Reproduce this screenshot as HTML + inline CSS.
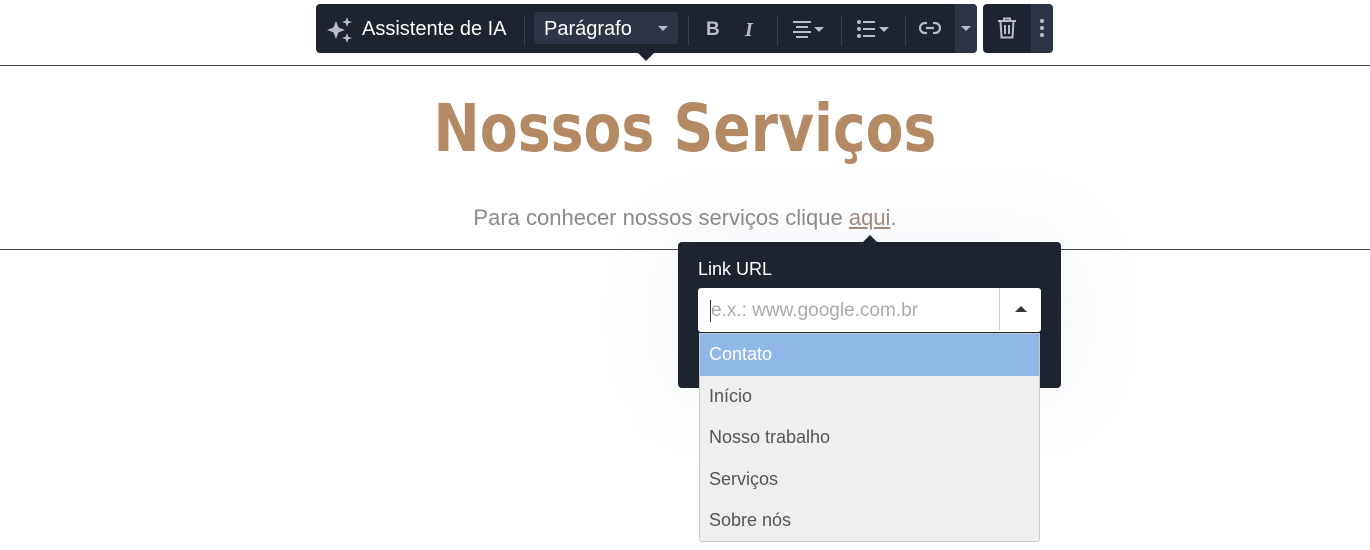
<!DOCTYPE html>
<html><head><meta charset="utf-8"><style>
*{margin:0;padding:0;box-sizing:border-box}
body{width:1370px;height:550px;background:#fff;position:relative;overflow:hidden;font-family:"Liberation Sans",sans-serif}
.abs{position:absolute}
.tb{left:316px;top:4px;width:661px;height:49px;background:#1e2330;border-radius:4px}
.sep{position:absolute;top:12px;width:1px;height:30px;background:#3a4152}
.ic{position:absolute;fill:#b8bdc8}
.line{left:0;width:1370px;height:1px;background:#444}
.item{height:41.5px;line-height:41.5px;padding-left:9px;font-size:18px;color:#555}
</style></head><body>
<div class="abs line" style="top:65px"></div>
<div class="abs line" style="top:249px"></div>

<div class="abs tb">
 <svg class="ic" style="left:10px;top:12px" width="28" height="28" viewBox="0 0 28 28"><path d="M10 5 L12.5 11.5 L19 14 L12.5 16.5 L10 23 L7.5 16.5 L1 14 L7.5 11.5Z"/><path d="M21 1 L22.3 4.7 L26 6 L22.3 7.3 L21 11 L19.7 7.3 L16 6 L19.7 4.7Z"/><path d="M21 17 L22.3 20.7 L26 22 L22.3 23.3 L21 27 L19.7 23.3 L16 22 L19.7 20.7Z"/></svg>
 <div class="abs" style="left:46px;top:14px;color:#fff;font-size:20px">Assistente de IA</div>
 <div class="sep" style="left:208px"></div>
 <div class="abs" style="left:218px;top:8px;width:144px;height:32px;background:#2d3446;border-radius:3px">
  <div class="abs" style="left:10px;top:6px;color:#fff;font-size:20px">Parágrafo</div>
  <div class="abs" style="left:124px;top:14px;border-left:5px solid transparent;border-right:5px solid transparent;border-top:5px solid #b8bdc8"></div>
 </div>
 <div class="sep" style="left:372px"></div>
 <div class="abs" style="left:390px;top:15px;color:#b8bdc8;font-size:19px;font-weight:bold">B</div>
 <div class="abs" style="left:429px;top:15px;color:#b8bdc8;font-size:20px;font-weight:bold;font-style:italic;font-family:'Liberation Serif',serif">I</div>
 <div class="sep" style="left:461px"></div>
 <svg class="ic" style="left:477px;top:15px" width="36" height="20" viewBox="0 0 36 20"><rect x="0" y="2" width="18" height="2"/><rect x="3" y="7" width="12" height="2"/><rect x="0" y="12" width="18" height="2"/><rect x="3" y="17" width="12" height="2"/><path d="M21 8 L31 8 L26 13Z"/></svg>
 <div class="sep" style="left:525px"></div>
 <svg class="ic" style="left:541px;top:15px" width="36" height="20" viewBox="0 0 36 20"><circle cx="2" cy="3" r="2"/><circle cx="2" cy="10" r="2"/><circle cx="2" cy="17" r="2"/><rect x="6" y="2" width="12" height="2"/><rect x="6" y="9" width="12" height="2"/><rect x="6" y="16" width="12" height="2"/><path d="M22 8 L32 8 L27 13Z"/></svg>
 <div class="sep" style="left:589px"></div>
 <svg style="left:603px;top:17px;position:absolute" width="22" height="14" viewBox="0 0 22 14"><path d="M8 2 H6 a5 5 0 0 0 0 10 H8 M14 2 H16 a5 5 0 0 1 0 10 H14 M7 7 H15" stroke="#b8bdc8" stroke-width="2.2" fill="none"/></svg>
 <div class="abs" style="left:639px;top:0;width:22px;height:49px;background:#2d3446;border-radius:0 4px 4px 0"></div>
 <div class="abs" style="left:645px;top:22px;border-left:5px solid transparent;border-right:5px solid transparent;border-top:5px solid #b8bdc8"></div>
 <div class="abs" style="left:322px;top:49px;border-left:8px solid transparent;border-right:8px solid transparent;border-top:8px solid #1e2330"></div>
</div>
<div class="abs" style="left:983px;top:4px;width:70px;height:49px;background:#1e2330;border-radius:4px;overflow:hidden">
 <div class="abs" style="left:48px;top:0;width:22px;height:49px;background:#2d3446"></div>
 <svg class="abs" style="left:14px;top:13px" width="20" height="22" viewBox="0 0 20 22"><path d="M1 4 H19 M7 4 V1.5 H13 V4 M3.5 4 L4.5 20.5 H15.5 L16.5 4 M8 8 V17 M12 8 V17" stroke="#b8bdc8" stroke-width="2" fill="none"/></svg>
 <svg class="ic" style="left:57px;top:15px" width="4" height="18" viewBox="0 0 4 18"><circle cx="2" cy="2" r="2"/><circle cx="2" cy="9" r="2"/><circle cx="2" cy="16" r="2"/></svg>
</div>

<div class="abs" style="left:0;top:90px;width:1370px;text-align:center;font-size:66px;font-weight:bold;color:#b48a65;font-family:'DejaVu Sans Condensed','Liberation Sans',sans-serif;transform:scaleX(0.93);transform-origin:685px 0">Nossos Serviços</div>
<div class="abs" style="left:0;top:205px;width:1370px;text-align:center;font-size:22px;color:#8a8a8a">Para conhecer nossos serviços clique <span style="text-decoration:underline;color:#a08a7a">aqui</span>.</div>

<div class="abs" style="left:678px;top:242px;width:383px;height:146px;background:#1e2330;border-radius:4px;box-shadow:0 0 80px rgba(150,170,210,0.15)">
 <div class="abs" style="left:184px;top:-7px;border-left:8px solid transparent;border-right:8px solid transparent;border-bottom:8px solid #1e2330"></div>
 <div class="abs" style="left:20px;top:17px;color:#fff;font-size:18px">Link URL</div>
 <div class="abs" style="left:20px;top:46px;width:343px;height:44px;background:#fff;border-radius:3px">
  <div class="abs" style="left:12px;top:12px;width:1px;height:22px;background:#333"></div>
  <div class="abs" style="left:13px;top:12px;color:#aaa;font-size:19px">e.x.: www.google.com.br</div>
  <div class="abs" style="left:301px;top:0;width:1px;height:42px;background:#ccc"></div>
  <div class="abs" style="left:317px;top:18px;border-left:6px solid transparent;border-right:6px solid transparent;border-bottom:6px solid #333"></div>
 </div>
</div>
<div class="abs" style="left:699px;top:333px;width:341px;height:209px;background:#efefef;border:1px solid #c8c8c8;border-radius:0 0 3px 3px">
 <div class="item" style="background:#8fb8e6;color:#fff">Contato</div>
 <div class="item">Início</div>
 <div class="item">Nosso trabalho</div>
 <div class="item">Serviços</div>
 <div class="item">Sobre nós</div>
</div>
</body></html>
